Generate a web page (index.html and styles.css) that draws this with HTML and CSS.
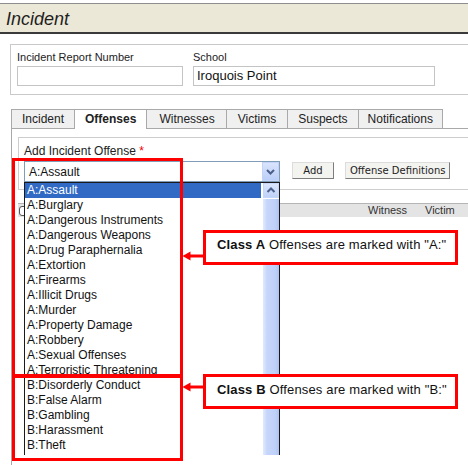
FILE: index.html
```html
<!DOCTYPE html>
<html>
<head>
<meta charset="utf-8">
<link rel="stylesheet" href="styles.css">
</head>
<body>
<div class="page">
  <div class="header"><span class="title">Incident</span></div>

  <div class="form-box">
    <div class="field f1">
      <div class="flabel">Incident Report Number</div>
      <div class="input"></div>
    </div>
    <div class="field f2">
      <div class="flabel">School</div>
      <div class="input">Iroquois Point</div>
    </div>
  </div>

  <div class="tabs">
    <div class="tab">Incident</div>
    <div class="tab active">Offenses</div>
    <div class="tab">Witnesses</div>
    <div class="tab">Victims</div>
    <div class="tab">Suspects</div>
    <div class="tab last">Notifications</div>
  </div>

  <div class="panel">
    <div class="offense-box">
      <div class="olabel">Add Incident Offense <span class="req">*</span></div>
      <div class="orow">
        <div class="select">
          <span class="sel-text">A:Assault</span>
          <span class="dd-btn">
            <svg width="17" height="19" viewBox="0 0 17 19"><polyline points="5,8 8.5,11.5 12,8" fill="none" stroke="#4a5f8a" stroke-width="2"/></svg>
          </span>
        </div>
        <div class="btn btn-add">Add</div>
        <div class="btn btn-def">Offense Definitions</div>
      </div>
    </div>
    <div class="grid-head">
      <span class="gcell"><span class="chk"></span></span>
      <span class="gcell">Witness</span>
      <span class="gcell">Victim</span>
    </div>
  </div>

  <div class="dropdown">
    <div class="items">
      <div class="item sel">A:Assault</div>
      <div class="item">A:Burglary</div>
      <div class="item">A:Dangerous Instruments</div>
      <div class="item">A:Dangerous Weapons</div>
      <div class="item">A:Drug Paraphernalia</div>
      <div class="item">A:Extortion</div>
      <div class="item">A:Firearms</div>
      <div class="item">A:Illicit Drugs</div>
      <div class="item">A:Murder</div>
      <div class="item">A:Property Damage</div>
      <div class="item">A:Robbery</div>
      <div class="item">A:Sexual Offenses</div>
      <div class="item">A:Terroristic Threatening</div>
      <div class="item">B:Disorderly Conduct</div>
      <div class="item">B:False Alarm</div>
      <div class="item">B:Gambling</div>
      <div class="item">B:Harassment</div>
      <div class="item">B:Theft</div>
    </div>
    <div class="scroll">
      <div class="sb-up">
        <svg width="16" height="15" viewBox="0 0 16 15"><polyline points="4.5,9 8,5.5 11.5,9" fill="none" stroke="#4a5f8a" stroke-width="2"/></svg>
      </div>
      <div class="sb-thumb"></div>
    </div>
  </div>

  <div class="mark mark-a"></div>
  <div class="mark mark-b"></div>

  <svg class="arrow arrow-a" width="22" height="12" viewBox="0 0 22 12">
    <line x1="7" y1="6" x2="22" y2="6" stroke="#f00" stroke-width="3"/>
    <polygon points="0.5,6 8.5,1.5 8.5,10.5" fill="#f00"/>
  </svg>
  <svg class="arrow arrow-b" width="22" height="12" viewBox="0 0 22 12">
    <line x1="7" y1="6" x2="22" y2="6" stroke="#f00" stroke-width="3"/>
    <polygon points="0.5,6 8.5,1.5 8.5,10.5" fill="#f00"/>
  </svg>

  <div class="callout callout-a"><b>Class A</b> Offenses are marked with "A:"</div>
  <div class="callout callout-b"><b>Class B</b> Offenses are marked with "B:"</div>
</div>
</body>
</html>
```

FILE: styles.css
```css
html, body {
  margin: 0;
  padding: 0;
}
body {
  width: 468px;
  height: 465px;
  overflow: hidden;
  background: #fff;
  font-family: "Liberation Sans", Arial, sans-serif;
  color: #222;
}
.page {
  position: relative;
  width: 468px;
  height: 465px;
  overflow: hidden;
}

/* Header */
.header {
  margin-top: 3px;
  height: 25px;
  padding-top: 3px;
  padding-left: 6px;
  border-top: 1px solid #8e8e8e;
  border-bottom: 2px solid #3a3a3a;
  background: #ece8d7;
}
.title {
  font-size: 18px;
  font-style: italic;
  line-height: 25px;
  color: #1e1e1e;
}

/* Form box */
.form-box {
  margin: 10px -20px 0 10px;
  border: 1px solid #c9c9c9;
  padding: 6px 0 8px 6px;
  display: flex;
  gap: 10px;
}
.flabel {
  font-size: 11px;
  line-height: 13px;
  color: #222;
}
.input {
  box-sizing: border-box;
  margin-top: 2px;
  height: 20px;
  border: 1px solid #c4c4c4;
  font-size: 13px;
  line-height: 18px;
  padding-left: 3px;
  color: #111;
}
.f1 { width: 166px; }
.f2 { width: 242px; }

/* Tabs */
.tabs {
  display: flex;
  margin: 14px 0 0 11px;
}
.tab {
  height: 18px;
  line-height: 18px;
  padding: 0 10px;
  font-size: 12px;
  color: #222;
  background: #f0f0f0;
  border: 1px solid #a9a9a9;
  border-right: none;
  border-bottom: none;
}
.tab:nth-child(3) { padding: 0 11px 0 12px; }
.tab:nth-child(4) { padding: 0 11px; }
.tab.last {
  border-right: 1px solid #a9a9a9;
  padding: 0 9px;
}
.tab.active {
  background: #fff;
  font-weight: bold;
  height: 19px;
  margin-bottom: -1px;
  position: relative;
  z-index: 1;
}

/* Panel */
.panel {
  margin-left: 11px;
  border-top: 1px solid #a9a9a9;
  border-left: 1px solid #a9a9a9;
  padding: 8px 0 0 6px;
  height: 340px;
}
.offense-box {
  border: 1px solid #cdcdcd;
  border-right: none;
  padding: 6px 0 7px 5px;
}
.olabel {
  font-size: 12px;
  line-height: 14px;
  color: #222;
}
.req {
  color: #e00;
}
.orow {
  display: flex;
  align-items: flex-start;
  margin-top: 3px;
}
.select {
  box-sizing: border-box;
  width: 256px;
  height: 21px;
  border: 1px solid #7f9db9;
  display: flex;
  align-items: center;
  padding-left: 4px;
  font-size: 12px;
  color: #111;
}
.sel-text {
  flex: 1;
}
.dd-btn {
  width: 17px;
  height: 19px;
  display: block;
  background: linear-gradient(to bottom, #dbe5fc, #b9cdf7);
  box-shadow: inset 0 0 0 1px #c3d3f8;
}
.dd-btn svg, .sb-up svg {
  display: block;
}
.btn {
  box-sizing: border-box;
  margin-top: 1px;
  height: 17px;
  min-width: 42px;
  padding: 0 4px;
  font-family: "DejaVu Sans", Verdana, sans-serif;
  font-size: 10px;
  line-height: 15px;
  text-align: center;
  color: #222;
  background: #f3f3ef;
  border: 1px solid;
  border-color: #dcdcdc #7d7d7d #7d7d7d #dcdcdc;
}
.btn-add { margin-left: 12px; }
.btn-def { margin-left: 11px; }

.grid-head {
  margin-top: 13px;
  height: 13px;
  border-top: 1px solid #b5b5b5;
  background: #e4e4e4;
  display: grid;
  grid-template-columns: 350px 57px auto;
  font-size: 11px;
  line-height: 13px;
  color: #333;
}
.chk {
  display: block;
  margin: 2px 0 0 1px;
  width: 8px;
  height: 8px;
  border: 1px solid #555;
  border-radius: 3px;
  background: #fff;
}

/* Dropdown popup */
.dropdown {
  position: absolute;
  left: 24px;
  top: 182px;
  width: 256px;
  height: 273px;
  box-sizing: border-box;
  border: 1px solid #1a1a1a;
  border-bottom: none;
  background: #fff;
  display: flex;
  overflow: hidden;
}
.items {
  width: 236px;
}
.item {
  height: 15px;
  line-height: 15px;
  font-size: 12px;
  padding-left: 2px;
  white-space: nowrap;
  color: #111;
}
.item.sel {
  background: #316ac5;
  color: #fff;
}
.scroll {
  margin-left: 2px;
  width: 16px;
  display: flex;
  flex-direction: column;
}
.sb-up {
  height: 15px;
  background: linear-gradient(to bottom, #dde7fd, #bdd0f8);
  box-shadow: inset 0 0 0 1px #c6d6f9;
}
.sb-thumb {
  flex: 1;
  margin-top: 1px;
  background: linear-gradient(to right, #e2eafd 0, #c6d6fa 25%, #c0d1f9 75%, #aec3f2 100%);
}

/* Annotations */
.mark {
  position: absolute;
  box-sizing: border-box;
  border: 3px solid #f00;
}
.mark-a {
  left: 12px;
  top: 158px;
  width: 171px;
  height: 220px;
}
.mark-b {
  left: 12px;
  top: 374px;
  width: 171px;
  height: 87px;
}
.arrow {
  position: absolute;
  left: 182px;
}
.arrow-a { top: 250px; }
.arrow-b { top: 381px; }

.callout {
  position: absolute;
  left: 203px;
  width: 255px;
  height: 35px;
  box-sizing: border-box;
  border: 3px solid #f00;
  background: #fff;
  padding-left: 11px;
  font-size: 13px;
  letter-spacing: 0.15px;
  color: #111;
  white-space: nowrap;
}
.callout-a {
  top: 230px;
  line-height: 24px;
}
.callout-b {
  top: 374px;
  line-height: 26px;
}
```
